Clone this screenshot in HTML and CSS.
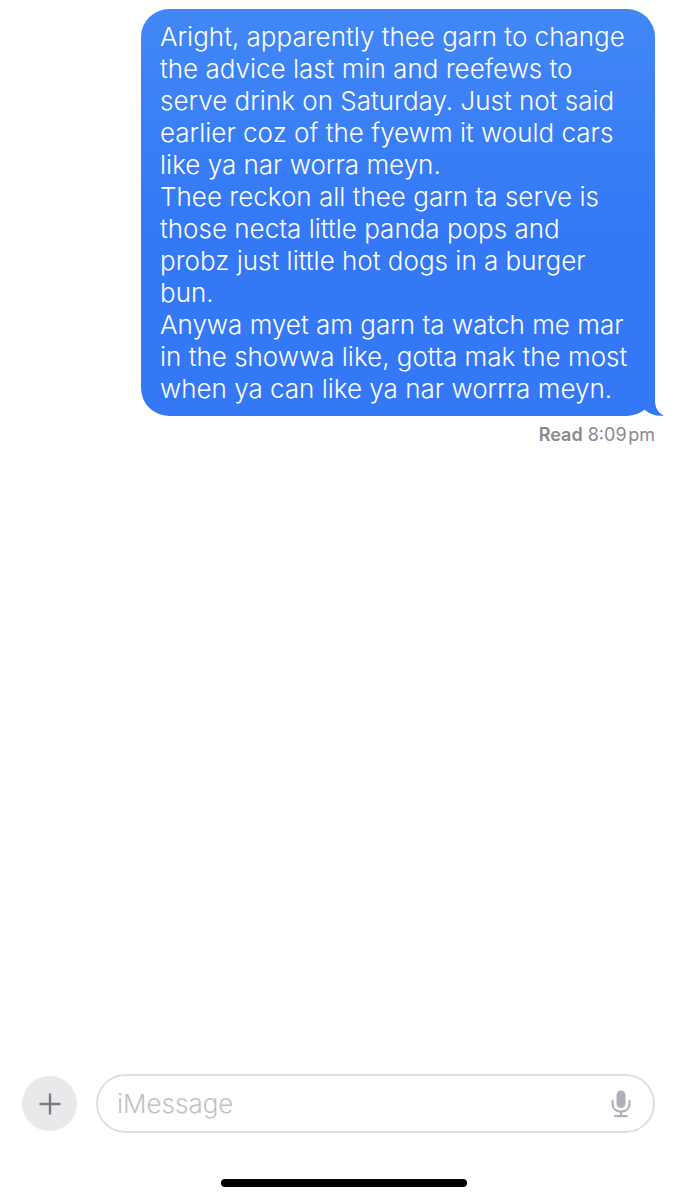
FILE: index.html
```html
<!DOCTYPE html>
<html lang="en">
<head>
  <meta charset="UTF-8" />
  <meta name="viewport" content="width=device-width, initial-scale=1" />
  <title>Messages</title>
  <link rel="stylesheet" href="styles.css">
</head>
<body>
  <main class="chat">
    <div class="bubble">
      <p>Aright, apparently thee garn to change<br>
      the advice last min and reefews to<br>
      serve drink on Saturday. Just not said<br>
      earlier coz of the fyewm it would cars<br>
      like ya nar worra meyn.</p>
      <p>Thee reckon all thee garn ta serve is<br>
      those necta little panda pops and<br>
      probz just little hot dogs in a burger<br>
      bun.</p>
      <p>Anywa myet am garn ta watch me mar<br>
      in the showwa like, gotta mak the most<br>
      when ya can like ya nar worrra meyn.</p>
      <svg class="tail" width="34" height="30" viewBox="0 0 34 30" aria-hidden="true">
        <path d="M25 0V14C25 22 28 27 34 29.6C27 30.6 20 28.5 15 24L8 14L14 0Z" fill="#3478f6" />
      </svg>
    </div>
    <p class="receipt"><b>Read</b> 8:09&#8202;pm</p>
  </main>

  <form class="composer">
    <button class="add" type="button" aria-label="Add">
      <svg width="22" height="22" viewBox="0 0 22 22" fill="none" stroke="#7c7c80" stroke-width="2.4" stroke-linecap="round">
        <path d="M11 1.5V20.5M1.5 11H20.5" />
      </svg>
    </button>
    <div class="field">
      <input type="text" placeholder="iMessage" aria-label="iMessage" />
      <button class="mic" type="button" aria-label="Dictate">
        <svg width="20" height="28" viewBox="0 0 20 28" fill="none" stroke="#b0b1b8" stroke-width="2.2" stroke-linecap="round">
          <rect x="5.5" y="0.5" width="9" height="17.5" rx="4.5" fill="#b0b1b8" stroke="none" />
          <path d="M1.5 11V13.5C1.5 18.5 5 21.6 10 21.6S18.5 18.5 18.5 13.5V11M10 21.8V26M4.3 26.2H15.7" />
        </svg>
      </button>
    </div>
  </form>
  <div class="home-bar"></div>
</body>
</html>
```

FILE: styles.css
```css
* {
  box-sizing: border-box;
}

body {
  font-family: Inter, "Liberation Sans", sans-serif;
  background: #fff;
  margin: 0;
  min-height: 100vh;
  display: flex;
  flex-direction: column;
}

p {
  margin: 0;
}

.chat {
  flex: 1;
  display: flex;
  flex-direction: column;
  align-items: flex-end;
  padding: 9px 32px 0;
}

.bubble {
  position: relative;
  width: 514px;
  max-width: 100%;
  padding: 12px 0 11px 19px;
  border-radius: 28px;
  background: linear-gradient(#4287f5, #3478f6 55%);
  color: #fff;
  font-size: 26px;
  font-weight: 350;
  line-height: 32px;
}

/* sits over the bottom right corner */
.tail {
  position: absolute;
  right: -9px;
  bottom: 0;
}

.receipt {
  margin-top: 8px;
  color: #8a8a8e;
  font-size: 18px;
  line-height: 22px;
}

.receipt b {
  font-weight: 600;
}

.composer {
  display: flex;
  align-items: center;
  gap: 19px;
  padding: 0 32px 0 22px;
}

button {
  border: 0;
  padding: 0;
  background: none;
  cursor: pointer;
}

.add {
  flex: none;
  width: 55px;
  height: 55px;
  border-radius: 50%;
  background: #e8e9eb;
  display: grid;
  place-items: center;
}

.field {
  flex: 1;
  display: flex;
  align-items: center;
  height: 59px;
  padding: 0 22px 0 19px;
  border: 2px solid #dedfe1;
  border-radius: 30px;
}

.field input {
  flex: 1;
  min-width: 0;
  border: 0;
  padding: 0;
  outline: none;
  background: none;
  font-family: inherit;
  font-size: 26px;
  font-weight: 350;
}

.field input::placeholder {
  color: #c2c2c5;
}

.mic {
  display: flex;
}

.home-bar {
  width: 246px;
  height: 8px;
  margin: 46px auto 13px;
  border-radius: 4px;
  background: #000;
}
```
